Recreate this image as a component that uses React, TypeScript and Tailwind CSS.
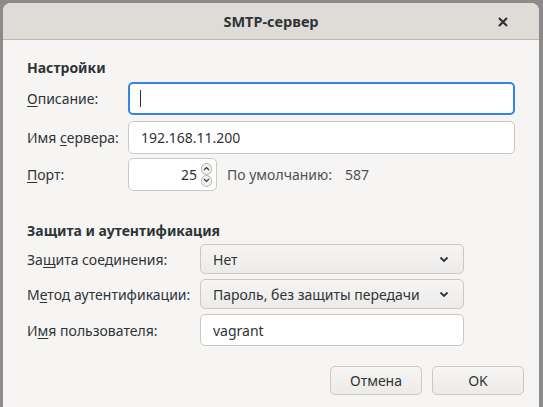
import React from 'react';

const font = { fontFamily: '"Noto Sans", "Open Sans", sans-serif' };

const Mn: React.FC<{ children: React.ReactNode }> = ({ children }) => (
  <span className="underline underline-offset-2 decoration-1">{children}</span>
);

const Chevron: React.FC = () => (
  <svg width="10" height="10" viewBox="0 0 10 10" className="text-[#2e3436]">
    <path d="M1.5 3.5 L5 7 L8.5 3.5" fill="none" stroke="currentColor" strokeWidth="1.8" />
  </svg>
);

const SpinBtn: React.FC<{ up?: boolean }> = ({ up }) => (
  <div className="w-[11px] h-[12px] rounded-full border border-[#b6b3ae] bg-[#f4f3f2] flex items-center justify-center">
    <svg width="7" height="5" viewBox="0 0 7 5">
      <path d={up ? 'M1 4 L3.5 1.5 L6 4' : 'M1 1 L3.5 3.5 L6 1'} fill="none" stroke="#2e3436" strokeWidth="1.1" />
    </svg>
  </div>
);

export default function App() {
  return (
    <div className="w-[543px] h-[407px] bg-[#8b8b8b] pt-[3px] pl-[3px] pr-[4px] overflow-hidden" style={font}>
      <div className="h-full rounded-t-[8px] overflow-hidden bg-[#f6f5f4] flex flex-col text-[14px] text-[#2e3436]">
        {/* Header bar */}
        <div className="h-[37px] shrink-0 bg-[#dfdcd8] border-b border-[#bfb8b1] flex items-center justify-center relative">
          <span className="font-bold text-[14.5px] text-[#2e3436] mt-[1px]">SMTP-сервер</span>
          <svg width="12" height="12" viewBox="0 0 12 12" className="absolute right-[30px] top-[13px]">
            <path d="M2 2 L10 10 M10 2 L2 10" stroke="#2e3436" strokeWidth="2.2" />
          </svg>
        </div>

        <div className="pl-[24px] pr-[24px] pt-[18px]">
          {/* Settings */}
          <div className="font-bold mb-[4px] leading-[20px]">Настройки</div>
          <div className="grid grid-cols-[101px_1fr] gap-y-[6px] items-center">
            <div><Mn>О</Mn>писание:</div>
            <div className="h-[33px] rounded-[5px] border-2 border-[#3584e4] bg-white flex items-center pl-[10px]">
              <div className="w-[1px] h-[17px] bg-[#2e3436]" />
            </div>
            <div>Имя <Mn>с</Mn>ервера:</div>
            <div className="h-[33px] rounded-[5px] border border-[#cdc7c2] bg-white flex items-center pl-[12px]">
              192.168.11.200
            </div>
            <div className="-mt-[2px]"><Mn>П</Mn>орт:</div>
            <div className="flex items-center -mt-[2px]">
              <div className="w-[89px] h-[33px] rounded-[5px] border border-[#cdc7c2] bg-white flex items-center justify-end pr-[4px] gap-[4px]">
                <span>25</span>
                <div className="flex flex-col">
                  <SpinBtn up />
                  <SpinBtn />
                </div>
              </div>
              <span className="ml-[10px] text-[#4d5254]">По умолчанию:</span>
              <span className="ml-[13px] text-[#4d5254]">587</span>
            </div>
          </div>

          {/* Security */}
          <div className="font-bold mt-[30px] mb-[3px] leading-[20px]">Защита и аутентификация</div>
          <div className="grid grid-cols-[173px_264px] gap-y-[5px] items-center">
            <div>За<Mn>щ</Mn>ита соединения:</div>
            <div className="h-[30px] rounded-[5px] border border-[#cdc7c2] bg-gradient-to-b from-[#f6f5f4] to-[#edebe9] flex items-center justify-between pl-[12px] pr-[14px]">
              <span>Нет</span>
              <Chevron />
            </div>
            <div>М<Mn>е</Mn>тод аутентификации:</div>
            <div className="h-[30px] rounded-[5px] border border-[#cdc7c2] bg-gradient-to-b from-[#f6f5f4] to-[#edebe9] flex items-center justify-between pl-[12px] pr-[14px]">
              <span>Пароль, без защиты передачи</span>
              <Chevron />
            </div>
            <div>И<Mn>м</Mn>я пользователя:</div>
            <div className="h-[32px] rounded-[5px] border border-[#cdc7c2] bg-white flex items-center pl-[12px]">
              vagrant
            </div>
          </div>

          {/* Buttons */}
          <div className="flex justify-end gap-[10px] mt-[20px] -mr-[9px]">
            <button className="w-[92px] h-[29px] rounded-[5px] border border-[#cdc7c2] bg-gradient-to-b from-[#f6f5f4] to-[#edebe9] text-[#2e3436]">
              Отмена
            </button>
            <button className="w-[92px] h-[29px] rounded-[5px] border border-[#cdc7c2] bg-gradient-to-b from-[#f6f5f4] to-[#edebe9] text-[#2e3436]">
              OK
            </button>
          </div>
        </div>
      </div>
    </div>
  );
}
